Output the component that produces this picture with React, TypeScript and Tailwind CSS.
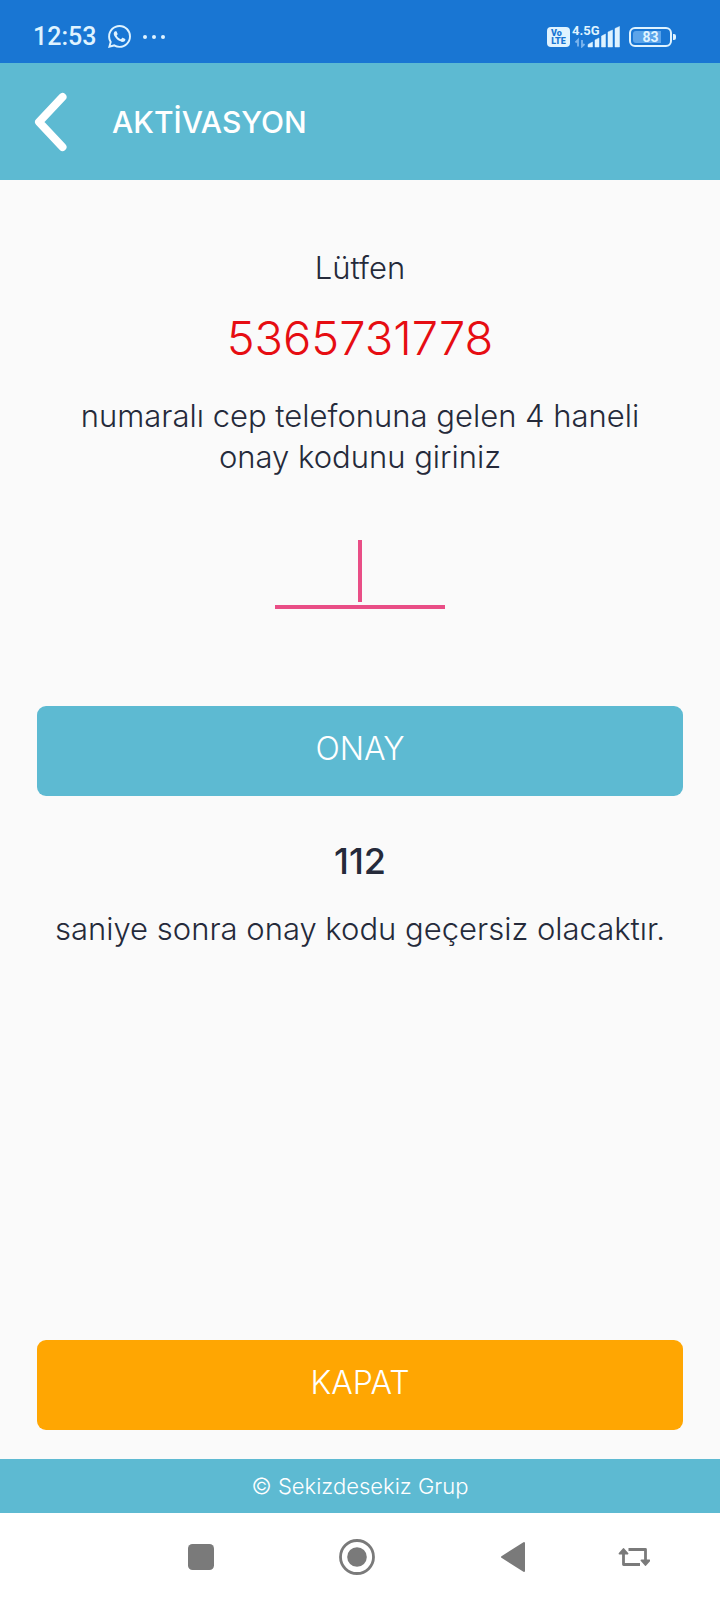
import React from "react";

function WhatsAppIcon() {
  return (
    <svg viewBox="0 0 24 24" className="size-[23px]" fill="#dff3ff" aria-hidden="true">
      <path d="M17.472 14.382c-.297-.149-1.758-.867-2.03-.967-.273-.099-.471-.148-.67.15-.197.297-.767.966-.94 1.164-.173.199-.347.223-.644.075-.297-.15-1.255-.463-2.39-1.475-.883-.788-1.48-1.761-1.653-2.059-.173-.297-.018-.458.13-.606.134-.133.298-.347.446-.52.149-.174.198-.298.298-.497.099-.198.05-.371-.025-.52-.075-.149-.669-1.612-.916-2.207-.242-.579-.487-.5-.669-.51-.173-.008-.371-.01-.57-.01-.198 0-.52.074-.792.372-.272.297-1.04 1.016-1.04 2.479 0 1.462 1.065 2.875 1.213 3.074.149.198 2.096 3.2 5.077 4.487.709.306 1.262.489 1.694.625.712.227 1.36.195 1.871.118.571-.085 1.758-.719 2.006-1.413.248-.694.248-1.289.173-1.413-.074-.124-.272-.198-.57-.347m-5.421 7.403h-.004a9.87 9.87 0 01-5.031-1.378l-.361-.214-3.741.982.998-3.648-.235-.374a9.86 9.86 0 01-1.51-5.26c.001-5.45 4.436-9.884 9.888-9.884 2.64 0 5.122 1.03 6.988 2.898a9.825 9.825 0 012.893 6.994c-.003 5.45-4.437 9.884-9.885 9.884m8.413-18.297A11.815 11.815 0 0012.05 0C5.495 0 .16 5.335.157 11.892c0 2.096.547 4.142 1.588 5.945L.057 24l6.305-1.654a11.882 11.882 0 005.683 1.448h.005c6.554 0 11.89-5.335 11.893-11.893a11.821 11.821 0 00-3.48-8.413z" />
    </svg>
  );
}

function SignalIcon() {
  return (
    <svg viewBox="0 0 48 22" className="h-[22px] w-12" aria-hidden="true">
      <g fill="#dff3ff">
        <path d="M16 21v-2.500l4.500-2.500v5zM23 21v-7l4-2v9zM29.500 21V10l4-2v13zM36 21V6l4.500-2v17zM43 21V2.500L47.500.5V21z" stroke="#dff3ff" strokeWidth=".5" strokeLinejoin="round" />
      </g>
      <path d="M6 20.500v-6.500l-2.500 2.500M10 14v6.500l2.500-2.500" fill="none" stroke="#7db6ee" strokeWidth="1.800" />
    </svg>
  );
}

function StatusBar() {
  return (
    <div className="flex h-[63px] items-center justify-between bg-[#1976d3] pt-[10px] pr-11 pl-[33px] font-['Roboto',sans-serif] text-[#dff3ff]">
      <div className="flex items-center gap-3">
        <time className="text-[25px] leading-8 font-medium">12:53</time>
        <WhatsAppIcon />
        <svg viewBox="0 0 22 4" className="h-1 w-[22px]" fill="#dff3ff" aria-hidden="true">
          <circle cx="2" cy="2" r="2" />
          <circle cx="11" cy="2" r="2" />
          <circle cx="20" cy="2" r="2" />
        </svg>
      </div>
      <div className="flex items-center">
        <div className="mr-[2px] flex h-5 w-[23px] flex-col items-center justify-center rounded-[4px] bg-[#dff3ff] text-[9px] leading-[8px] font-black text-[#1976d3]">
          <span className="self-start pl-1">Vo</span>
          <span>LTE</span>
        </div>
        <div className="relative mr-[9px]">
          <SignalIcon />
          <span className="absolute -top-px left-0 text-[13px] leading-[12px] font-bold">4.5G</span>
        </div>
        <div className="flex items-center gap-px">
          <div className="flex h-5 w-[43px] rounded-[6px] border-2 border-[#dff3ff] p-[2px]">
            <div className="flex w-full items-center justify-center rounded-[3px] bg-linear-to-r from-[#5ba4ea] from-80% to-transparent to-80% text-sm leading-none font-bold">
              83
            </div>
          </div>
          <div className="h-[6px] w-[3px] rounded-r-[2px] bg-[#dff3ff]" />
        </div>
      </div>
    </div>
  );
}

function Header() {
  return (
    <header className="flex h-[117px] items-center bg-[#5dbad2] pl-[34px] text-white">
      <button type="button" aria-label="Geri" className="mr-11">
        <svg viewBox="0 0 34 60" className="block h-[60px] w-[34px]" fill="none" stroke="#fff" strokeWidth="8" aria-hidden="true">
          <path d="M28.500 5 5 30l23.500 25" strokeLinecap="round" strokeLinejoin="round" />
        </svg>
      </button>
      <h1 className="text-[30px] leading-10 font-medium">AKTİVASYON</h1>
    </header>
  );
}

function NavBar() {
  return (
    <nav className="flex h-[87px] items-center bg-white text-[#7a7a7a]">
      <div className="flex w-full items-center justify-between pr-[70px] pl-[187px]">
        <button type="button" aria-label="Son uygulamalar">
          <svg viewBox="0 0 28 28" className="block size-7" aria-hidden="true">
            <rect x="1" y="1" width="26" height="26" rx="4.500" fill="currentColor" />
          </svg>
        </button>
        <button type="button" aria-label="Ana ekran" className="ml-8">
          <svg viewBox="0 0 36 36" className="block size-9" aria-hidden="true">
            <circle cx="18" cy="18" r="16.500" fill="none" stroke="currentColor" strokeWidth="2.800" />
            <circle cx="18" cy="18" r="9.800" fill="currentColor" />
          </svg>
        </button>
        <button type="button" aria-label="Geri" className="ml-8">
          <svg viewBox="0 0 26 32" className="block h-8 w-[26px]" aria-hidden="true">
            <path d="M24 2v28L2 16z" fill="currentColor" stroke="currentColor" strokeWidth="2" strokeLinejoin="round" />
          </svg>
        </button>
        <button type="button" aria-label="Ekranı döndür">
          <svg viewBox="0 0 32 20" className="block h-5 w-8" aria-hidden="true">
            <path d="M5.500 6v11.500h16.500M10.500 2.500h17V14" fill="none" stroke="currentColor" strokeWidth="2.800" strokeLinejoin="round" />
            <path d="M5.500 2 9.500 6.500h-8zM27.500 18 23.500 13.500h8z" fill="currentColor" stroke="currentColor" strokeWidth="1.800" strokeLinejoin="round" />
          </svg>
        </button>
      </div>
    </nav>
  );
}

export default function App() {
  return (
    <div className="flex min-h-screen flex-col bg-[#fafafa] font-['Inter',sans-serif] text-[#252a3a]">
      <StatusBar />
      <Header />
      <main className="flex flex-1 flex-col px-[37px] pt-[67px] pb-[29px] text-center text-[31px] leading-[41px] font-light">
        <p>Lütfen</p>
        <p className="mt-5 text-[47px] leading-[60px] text-[#e60d12]">5365731778</p>
        <label htmlFor="code" className="mt-[27px] px-6">
          numaralı cep telefonuna gelen 4 haneli onay kodunu giriniz
        </label>
        <div className="relative mx-auto mt-[63px] w-[170px]">
          <input
            id="code"
            type="text"
            inputMode="numeric"
            maxLength={4}
            className="block h-[69px] w-full border-b-4 border-[#e94e86] bg-transparent text-center text-[48px] caret-transparent outline-none"
          />
          <div className="pointer-events-none absolute inset-x-0 top-0 flex justify-center" aria-hidden="true">
            <span className="h-[62px] w-1 bg-[#e94e86]" />
          </div>
        </div>
        <button type="button" className="mt-[97px] h-[90px] rounded-[9px] bg-[#5dbad2] pb-[6px] text-[32px] text-white">
          ONAY
        </button>
        <p className="mt-[45px] text-[36px] font-medium">112</p>
        <p className="mt-[26px]">saniye sonra onay kodu geçersiz olacaktır.</p>
        <button type="button" className="mt-auto h-[90px] rounded-[9px] bg-[#ffa602] pb-[6px] text-[32px] text-white">
          KAPAT
        </button>
      </main>
      <footer className="flex h-[54px] items-center justify-center bg-[#5dbad2] text-[22px] font-light text-white">
        © Sekizdesekiz Grup
      </footer>
      <NavBar />
    </div>
  );
}
